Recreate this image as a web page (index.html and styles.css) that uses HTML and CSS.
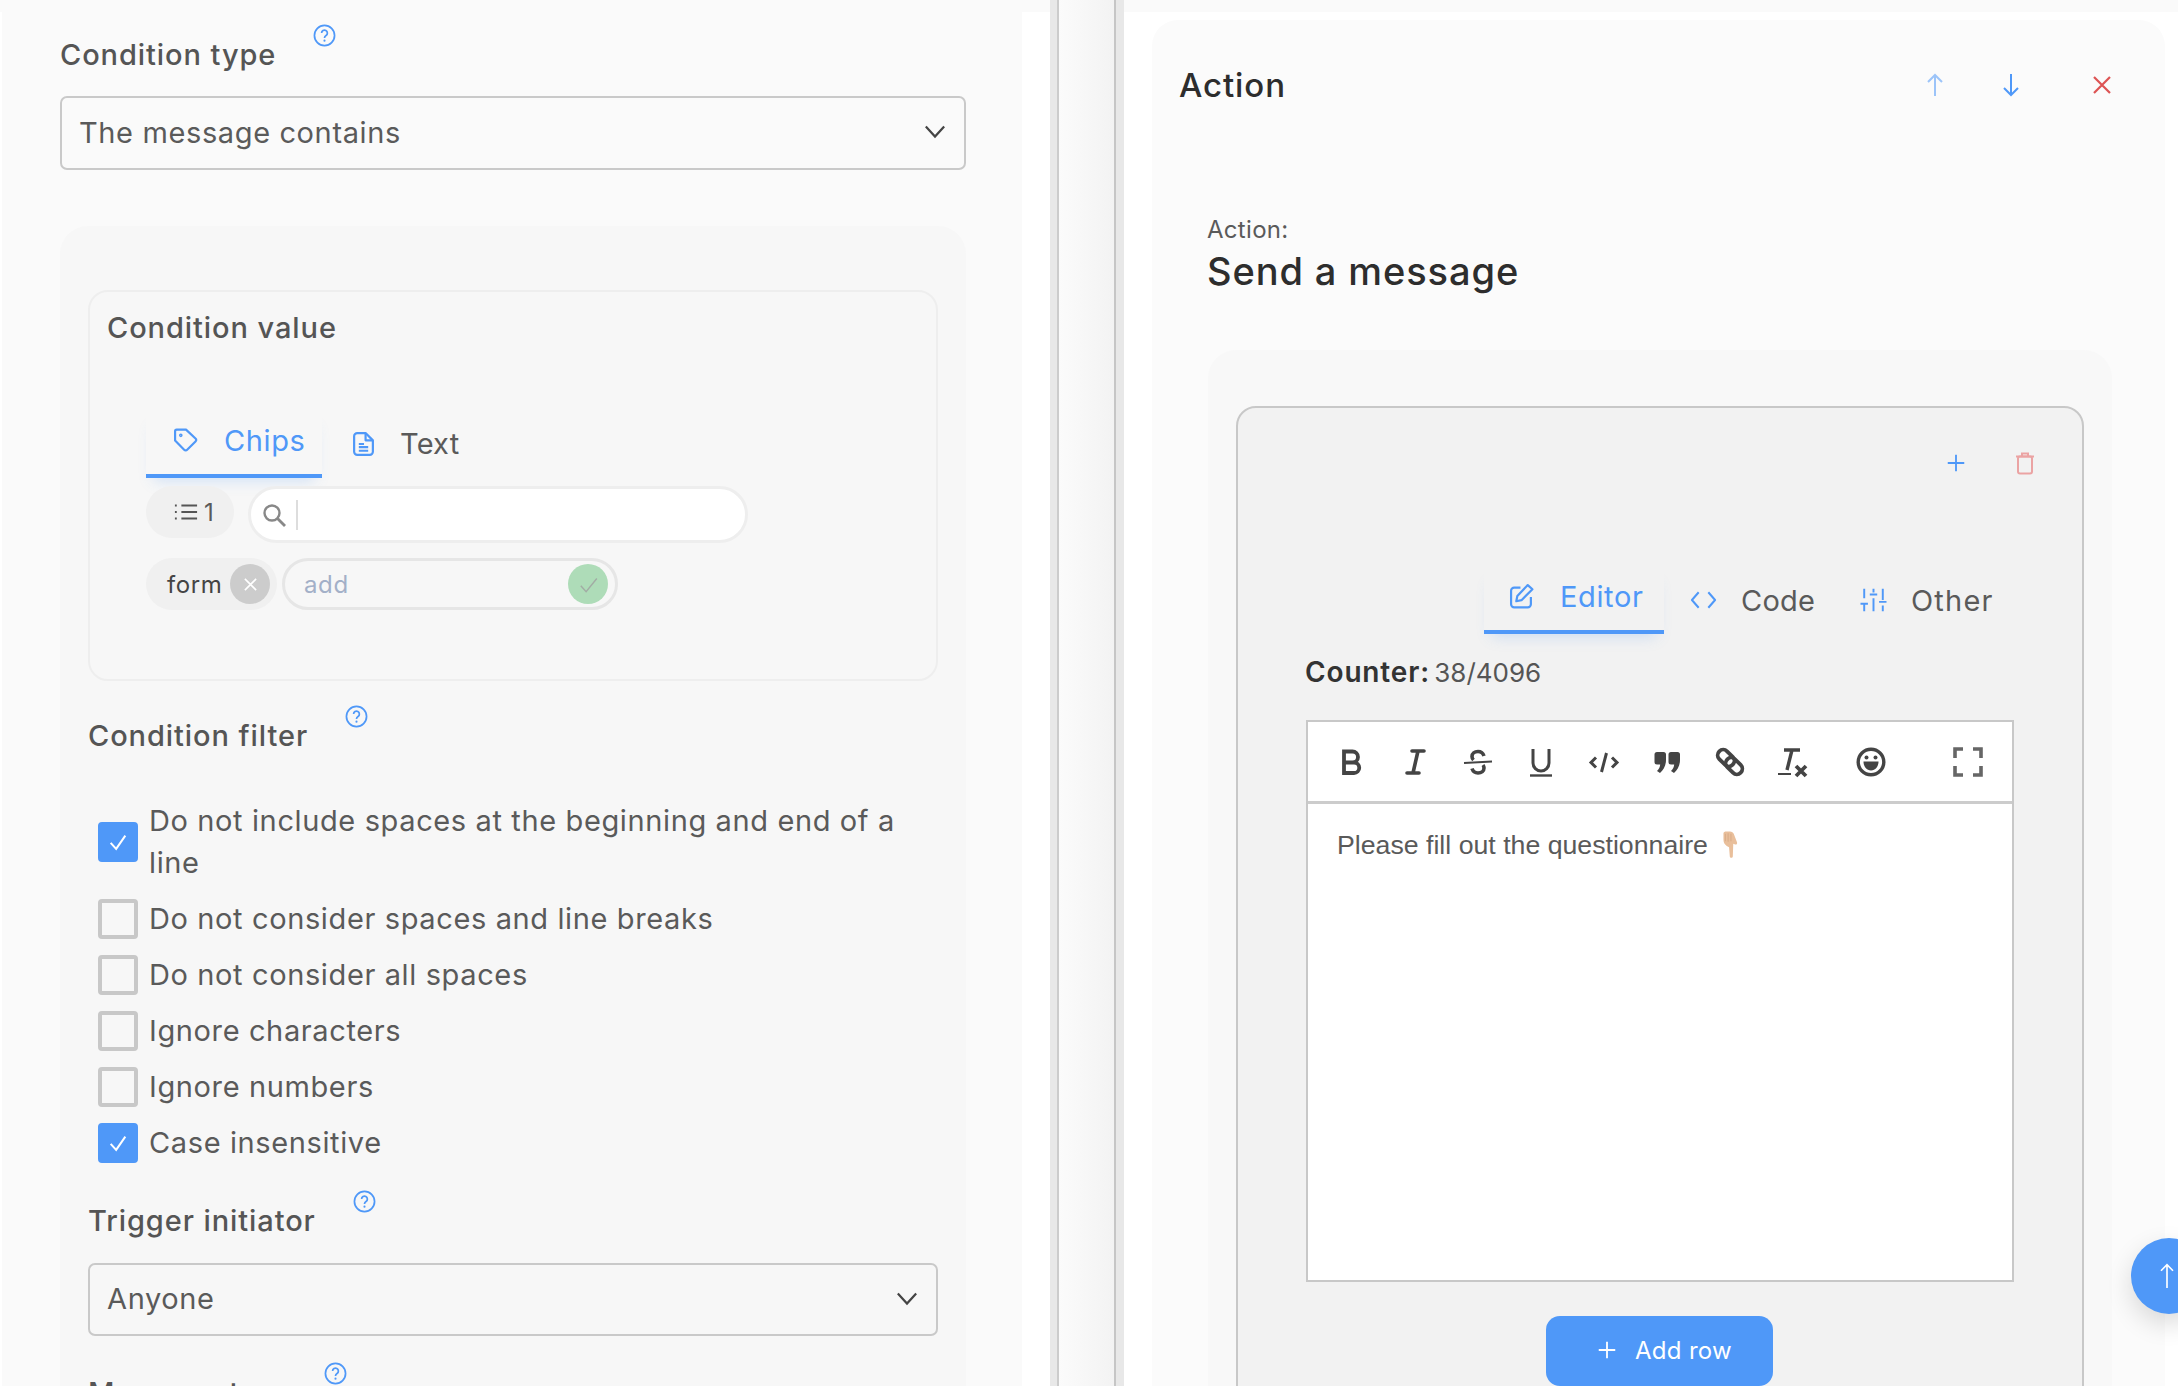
FILE: index.html
```html
<!DOCTYPE html>
<html lang="en">
<head>
<meta charset="utf-8">
<title>Condition and action</title>
<link rel="stylesheet" href="styles.css">
</head>
<body>
<svg class="defs" width="0" height="0" aria-hidden="true">
  <symbol id="help" viewBox="0 0 24 24"><circle cx="12" cy="12" r="10.5" fill="none" stroke="currentColor" stroke-width="1.8"/><path d="M9 9.5a3 3 0 1 1 4.6 2.5c-1 .7-1.6 1.2-1.6 2.5" fill="none" stroke="currentColor" stroke-width="1.8"/><circle cx="12" cy="17.4" r="1.100" fill="currentColor"/></symbol>
  <symbol id="chev" viewBox="0 0 24 24"><path d="M2 6l10 11L22 6" fill="none" stroke="currentColor" stroke-width="2.4"/></symbol>
  <symbol id="check" viewBox="0 0 24 24"><path d="M4 13l6 6.500L20 5" fill="none" stroke="currentColor" stroke-width="2.200"/></symbol>
</svg>

<main class="left-pane">
  <div class="left-col">
    <div class="label-row first">
      <span class="label">Condition type</span>
      <svg class="help"><use href="#help"/></svg>
    </div>
    <div class="select outer-select">
      <span>The message contains</span>
      <svg class="chev"><use href="#chev"/></svg>
    </div>

    <section class="panel">
      <div class="value-box">
        <div class="label">Condition value</div>
        <div class="tabs value-tabs">
          <div class="tab active chips-tab">
            <svg class="tab-icon" viewBox="0 0 24 24"><path d="M21.6 13.4l-8 8a2 2 0 0 1-2.9 0L2 12.5V3.5a1.5 1.5 0 0 1 1.5-1.5h9l9.1 8.6a2 2 0 0 1 0 2.8z"/><circle cx="7.5" cy="7.5" r=".7"/></svg>
            <span>Chips</span>
          </div>
          <div class="tab text-tab">
            <svg class="tab-icon" viewBox="0 0 24 24"><path d="M14 1.5H6a3 3 0 0 0-3 3v15a3 3 0 0 0 3 3h12a3 3 0 0 0 3-3V8.5z"/><path d="M14 1.5v7h7M7.5 12h5M7.5 15h9M7.5 18.500h9"/></svg>
            <span>Text</span>
          </div>
        </div>
        <div class="chip-row search-row">
          <div class="count-chip">
            <svg class="list-icon" viewBox="0 0 26 18"><path d="M8 2h17M8 9h17M8 16h17" stroke="#555" stroke-width="2" fill="none"/><path d="M1 2h2M1 9h2M1 16h2" stroke="#555" stroke-width="2" fill="none"/></svg>
            <span>1</span>
          </div>
          <div class="search">
            <svg class="search-icon" viewBox="0 0 24 24"><circle cx="10" cy="10" r="7.500" fill="none" stroke="#888" stroke-width="2.4"/><path d="M15.500 15.500l7.500 7.500" stroke="#888" stroke-width="2.800"/></svg>
            <span class="caret"></span>
          </div>
        </div>
        <div class="chip-row add-row-line">
          <div class="form-chip">
            <span>form</span>
            <span class="round round-grey"><svg viewBox="0 0 16 16"><path d="M2 2l12 12M14 2L2 14" stroke="#fff" stroke-width="1.700"/></svg></span>
          </div>
          <div class="add-input">
            <span>add</span>
            <span class="round round-green"><svg viewBox="0 0 16 16"><path d="M1.500 9l4.500 5L15 3" stroke="#a2aca4" stroke-width="1.200" fill="none"/></svg></span>
          </div>
        </div>
      </div>

      <div class="label-row filter-label">
        <span class="label">Condition filter</span>
        <svg class="help"><use href="#help"/></svg>
      </div>
      <div class="checks">
        <div class="check-row"><span class="box on"><svg><use href="#check"/></svg></span><span class="check-text">Do not include spaces at the beginning and end of a line</span></div>
        <div class="check-row"><span class="box"></span><span class="check-text">Do not consider spaces and line breaks</span></div>
        <div class="check-row"><span class="box"></span><span class="check-text">Do not consider all spaces</span></div>
        <div class="check-row"><span class="box"></span><span class="check-text">Ignore characters</span></div>
        <div class="check-row"><span class="box"></span><span class="check-text">Ignore numbers</span></div>
        <div class="check-row"><span class="box on"><svg><use href="#check"/></svg></span><span class="check-text">Case insensitive</span></div>
      </div>
      <div class="label-row trigger-label">
        <span class="label">Trigger initiator</span>
        <svg class="help"><use href="#help"/></svg>
      </div>
      <div class="select inner-select">
        <span>Anyone</span>
        <svg class="chev"><use href="#chev"/></svg>
      </div>
      <div class="label-row message-label">
        <span class="label">Message type</span>
        <svg class="help"><use href="#help"/></svg>
      </div>
    </section>
  </div>
</main>

<div class="splitter"></div>

<aside class="right-pane">
  <div class="card">
    <header class="card-head">
      <h1>Action</h1>
      <div class="head-icons">
        <svg class="arrow faded" viewBox="0 0 24 24"><path d="M12 23V2M5 9l7-7 7 7"/></svg>
        <svg class="arrow" viewBox="0 0 24 24"><path d="M12 1v21M5 15l7 7 7-7"/></svg>
        <svg class="close" viewBox="0 0 24 24"><path d="M4 4l16 16M20 4L4 20"/></svg>
      </div>
    </header>
    <div class="action-name">
      <div class="small">Action:</div>
      <div class="big">Send a message</div>
    </div>
    <section class="msg-panel">
      <div class="msg-box">
        <div class="row-tools">
          <svg class="plus" viewBox="0 0 24 24"><path d="M12 3v18M3 12h18"/></svg>
          <svg class="trash" viewBox="0 0 24 24"><path d="M3 5.500h18M9 5.500V2.500h6v3"/><rect x="5" y="5.500" width="14" height="17" rx="2"/></svg>
        </div>
        <div class="tabs editor-tabs">
          <div class="tab active editor-tab">
            <svg class="tab-icon" viewBox="0 0 24 24"><path d="M11 4H5a3 3 0 0 0-3 3v13a3 3 0 0 0 3 3h13a3 3 0 0 0 3-3v-7"/><path d="M18 1.500l4.500 4L12 16l-5 1 1-5z"/></svg>
            <span>Editor</span>
          </div>
          <div class="tab code-tab">
            <svg class="tab-icon wide" viewBox="0 0 28 24"><path d="M9 4l-7 8 7 8M19 4l7 8-7 8"/></svg>
            <span>Code</span>
          </div>
          <div class="tab other-tab">
            <svg class="tab-icon wide" viewBox="0 0 28 28"><path d="M4 2v10M4 18v8M14 2v4M14 12v14M24 2v12M24 20v6M0 18h8M10 8h8M20 16h8"/></svg>
            <span>Other</span>
          </div>
        </div>
        <div class="counter"><b>Counter:</b> 38/4096</div>
        <div class="editor">
          <div class="toolbar">
            <span class="tb"><svg viewBox="0 0 32 32"><path d="M8 5.500h8.500a5.500 5.500 0 0 1 0 11H8zM8 16.500h10a5.200 5.200 0 0 1 0 10.500H8z" fill="none" stroke-width="3.800"/></svg></span>
            <span class="tb"><svg viewBox="0 0 32 32"><path d="M13 5h12M8 27h12M19 5l-5 22" fill="none" stroke-width="3.600" stroke-linecap="round"/></svg></span>
            <span class="tb"><svg viewBox="0 0 32 32"><path d="M22 10c-1-3-3.500-4.500-6-4.500-3.500 0-6 2-6 5 0 1.500.6 2.700 1.500 3.600M21 19c.7.900 1 1.900 1 3 0 3-2.500 5-6 5-2.500 0-5-1.500-6-4.500" fill="none" stroke-width="3.600"/><path d="M2 17l28-1.500" fill="none" stroke-width="2"/></svg></span>
            <span class="tb"><svg viewBox="0 0 32 32"><path d="M8 3v14a8 8 0 0 0 16 0V3" fill="none" stroke-width="3"/><path d="M5 29.500h22" fill="none" stroke-width="2.400"/></svg></span>
            <span class="tb"><svg viewBox="0 0 32 32"><path d="M8 11.500l-5 5 5 5M24 11.500l5 5-5 5M18.500 7l-5 19" fill="none" stroke-width="3"/></svg></span>
            <span class="tb"><svg viewBox="0 0 32 32"><path class="solid" d="M6 6h6.500a2.500 2.500 0 0 1 2.500 2.500V14c0 5.500-2.500 10-6 13l-3-2c2-2 3-4 3.200-6.500H6A2.500 2.500 0 0 1 3.500 16V8.500A2.500 2.500 0 0 1 6 6zM20 6h6.500A2.500 2.500 0 0 1 29 8.500V14c0 5.500-2.500 10-6 13l-3-2c2-2 3-4 3.200-6.500H20a2.500 2.500 0 0 1-2.500-2.500V8.500A2.500 2.500 0 0 1 20 6z"/></svg></span>
            <span class="tb"><svg viewBox="0 0 32 32"><rect x="6.500" y="2.500" width="11" height="19" rx="5.500" transform="rotate(-45 12 12)" fill="none" stroke-width="3.800"/><rect x="14.500" y="10.500" width="11" height="19" rx="5.500" transform="rotate(-45 20 20)" fill="none" stroke-width="3.800"/></svg></span>
            <span class="tb"><svg viewBox="0 0 32 32"><path d="M7 4h16M15 4l-5 20" fill="none" stroke-width="3.400"/><path d="M1 28h13" fill="none" stroke-width="2"/><path d="M19 20l10 10M29 20L19 30" fill="none" stroke-width="3.800"/></svg></span>
            <span class="tb tb-emoji"><svg viewBox="0 0 32 32"><circle cx="16" cy="16" r="12.800" fill="none" stroke-width="3.400"/><circle class="solid" cx="11.500" cy="11.500" r="2"/><circle class="solid" cx="20.500" cy="11.500" r="2"/><path class="solid" d="M8.500 15.500h15c0 5-3 9-7.500 9s-7.500-4-7.500-9z"/></svg></span>
            <span class="tb tb-full"><svg viewBox="0 0 32 32"><path class="grey" d="M3 12V3h8M21 3h8v9M3 20v9h8M29 20v9h-8" fill="none" stroke-width="3.600"/></svg></span>
          </div>
          <div class="editor-body">
            <span>Please fill out the questionnaire</span>
            <svg class="hand" viewBox="0 0 20 30" role="img" aria-label="pointing down"><path d="M3 2.500c0-1.500 1.500-2 3-2h4c2 0 3.500 1 4 2.500l3.500 9c.500 1.500-.500 3-2 2.500l-2-.800-.500 13.500c0 2-3.200 2-3.200 0L9 17.500l-2.500-1.500C4 14.500 3 12 3 9.500z" fill="#e9bf9b"/><path d="M5 3v8M8 2.500v9M11 3v8" stroke="#cfa27e" stroke-width=".7" fill="none"/></svg>
          </div>
        </div>
        <button class="add-row" type="button">
          <svg viewBox="0 0 24 24"><path d="M12 3v18M3 12h18"/></svg>
          <span>Add row</span>
        </button>
      </div>
    </section>
  </div>
</aside>

<button class="fab" type="button" aria-label="Scroll to top">
  <svg viewBox="0 0 24 34"><path d="M12 33V2M4 10l8-8 8 8"/></svg>
</button>
</body>
</html>
```

FILE: styles.css
```css
* { box-sizing: border-box; }
html, body { margin: 0; height: 1386px; overflow: hidden; }
body {
  display: flex;
  width: 2178px;
  background: linear-gradient(#fafafa 12px, #fff 12px);
  font-family: Inter, "Liberation Sans", sans-serif;
  font-size: 28px;
  color: #5a5a5a;
  letter-spacing: .62px;
}
.defs { position: absolute; }

/* left pane */
.left-pane { flex: none; width: 1050px; padding-left: 2px; }
.left-col {
  width: 1020px;
  height: 1386px;
  padding: 35px 56px 0 58px;
  background: #fafafa;
  overflow: hidden;
}
.label { font-size: 29px; font-weight: 500; line-height: 40px; letter-spacing: .92px; color: #555; white-space: nowrap; }
.label-row { display: flex; height: 40px; }
.help { flex: none; width: 23px; height: 23px; margin: -11px 0 0 37px; color: #4f98f8; }
.message-label .help { margin-left: 29px; }

.select {
  display: flex;
  align-items: center;
  justify-content: space-between;
  border: 2px solid #c9c9c9;
  border-radius: 7px;
  height: 74px;
  padding: 0 18px 2px 17px;
  font-size: 29px;
}
.outer-select { margin-top: 21px; }
.inner-select { margin-top: 22px; height: 73px; }
.chev { width: 22px; height: 22px; color: #444; }

.panel {
  margin-top: 56px;
  height: 1200px;
  padding: 64px 28px 0;
  background: #f7f7f7;
  border-radius: 28px;
}
.value-box {
  height: 391px;
  padding: 16px 17px 0;
  border: 2px solid #eee;
  border-radius: 20px;
}

.tabs { display: flex; height: 68px; }
.value-tabs { margin: 62px 0 0 39px; }
.tab { display: flex; align-items: center; height: 68px; font-size: 29px; white-space: nowrap; }
.tab.active { color: #4f98f8; border-bottom: 4px solid #4f98f8; padding-bottom: 4px; box-shadow: 0 10px 14px -8px rgba(79,152,248,.25); }
.tab-icon { flex: none; width: 25px; height: 26px; fill: none; stroke: #4f98f8; stroke-width: 2.100; stroke-linejoin: round; }
.tab-icon.wide { width: 27px; }
.chips-tab { width: 176px; padding-left: 27px; gap: 26px; }
.text-tab { padding-left: 29px; gap: 24px; padding-bottom: 1px; letter-spacing: .2px; }

.chip-row { display: flex; margin-left: 39px; font-size: 24px; }
.search-row { margin-top: 8px; gap: 14px; }
.add-row-line { margin-top: 15px; gap: 5px; }
.count-chip {
  flex: none;
  display: flex;
  align-items: center;
  gap: 6px;
  width: 88px;
  height: 52px;
  padding-left: 28px;
  border-radius: 26px;
  background: #f0f0f0;
}
.list-icon { width: 24px; height: 18px; }
.search {
  flex: none;
  display: flex;
  align-items: center;
  gap: 10px;
  width: 500px;
  height: 57px;
  padding-left: 11px;
  background: #fff;
  border: 3px solid #eee;
  border-radius: 29px;
}
.search-icon { width: 24px; height: 24px; }
.caret { width: 2px; height: 30px; background: #ddd; }
.form-chip {
  flex: none;
  display: flex;
  align-items: center;
  justify-content: space-between;
  width: 131px;
  height: 52px;
  padding: 0 7px 0 21px;
  border-radius: 26px;
  background: #f0f0f0;
  color: #444;
}
.round { display: flex; align-items: center; justify-content: center; width: 40px; height: 40px; border-radius: 50%; }
.round-grey svg { width: 15px; height: 15px; }
.round-green svg { width: 19px; height: 19px; }
.round-grey { background: #ccc; }
.round-green { background: #aedcb8; }
.add-input {
  flex: none;
  display: flex;
  align-items: center;
  justify-content: space-between;
  width: 336px;
  height: 52px;
  padding: 0 7px 0 19px;
  border: 3px solid #e6e6e6;
  border-radius: 26px;
  color: #a3b0c8;
}

.filter-label { margin-top: 35px; }
.checks { display: flex; flex-direction: column; gap: 14px; margin: 44px 0 0 10px; }
.check-row { display: flex; align-items: center; gap: 11px; }
.check-text { line-height: 42px; font-size: 29px; }
.box { flex: none; width: 40px; height: 40px; border: 4px solid #c8c8c8; border-radius: 4px; }
.box.on { border-color: #4f98f8; background: #4f98f8; color: #fff; }
.box svg { display: block; width: 32px; height: 32px; padding: 5px; }
.trigger-label { margin-top: 37px; }
.message-label { margin-top: 37px; }

/* splitter */
.splitter {
  flex: none;
  width: 74px;
  border-left: 7px solid #e8e8e8;
  border-right: 8px solid #e8e8e8;
  background: linear-gradient(90deg, #ccc 2px, #fbfbfb 2px, #f3f3f3 57px, #c6c6c6 57px);
}

/* right pane */
.right-pane { flex: none; width: 1054px; padding: 20px 13px 0 28px; overflow: hidden; }
.card {
  height: 1500px;
  padding: 43px 51px 0 27px;
  background: #fbfbfb;
  border-radius: 26px 26px 0 0;
}
.card-head { display: flex; align-items: center; height: 44px; }
h1 { margin: 0; font-size: 33px; font-weight: 500; color: #2d2d2d; letter-spacing: .9px; }
.head-icons { display: flex; align-items: center; margin-left: auto; }
.arrow { width: 24px; height: 24px; fill: none; stroke: #4f98f8; stroke-width: 2; margin-right: 52px; }
.arrow.faded { opacity: .55; }
.arrow + .arrow { margin-right: 67px; }
.close { width: 24px; height: 24px; fill: none; stroke: #dd5353; stroke-width: 2.200; }

.action-name { margin: 108px 0 0 28px; color: #2d2d2d; }
.small { font-size: 24px; line-height: 30px; color: #5a5a5a; letter-spacing: .3px; }
.big { margin-top: 3px; font-size: 38px; line-height: 46px; font-weight: 500; letter-spacing: .9px; }

.msg-panel {
  width: 904px;
  margin: 56px 0 0 29px;
  padding: 56px 28px 0;
  background: #f8f8f8;
  border-radius: 28px;
}
.msg-box {
  width: 848px;
  height: 1100px;
  padding: 43px 45px 0 0;
  border: 2px solid #c8c8c8;
  border-radius: 20px 20px 0 0;
  background: #f2f2f2;
}
.row-tools { display: flex; justify-content: flex-end; gap: 46px; height: 24px; }
.plus { width: 22px; height: 24px; fill: none; stroke: #4f98f8; stroke-width: 2; }
.trash { width: 24px; height: 24px; fill: none; stroke: #eba3a3; stroke-width: 2; }

.editor-tabs { margin: 91px 0 0 246px; }
.editor-tab { width: 180px; padding-left: 25px; gap: 26px; }
.code-tab { width: 196px; padding-left: 26px; gap: 24px; letter-spacing: .2px; }
.other-tab { gap: 24px; letter-spacing: 1.2px; }
.counter { margin: 20px 0 0 67px; padding-top: 1px; line-height: 35px; font-size: 26px; color: #555; letter-spacing: 0; word-spacing: -3px; }
.counter b { font-size: 28px; font-weight: 600; letter-spacing: .85px; color: #333; }

.editor {
  width: 708px;
  height: 562px;
  margin: 30px 0 0 68px;
  background: #fff;
  border: 2px solid #c8c8c8;
}
.toolbar { display: flex; align-items: center; height: 82px; padding-left: 12px; border-bottom: 3px solid #ccc; }
.tb { flex: none; display: flex; justify-content: center; width: 63px; }
.tb svg { width: 32px; height: 32px; stroke: #444; }
.tb .solid { fill: #444; stroke: none; }
.tb .grey { stroke: #666; }
.tb-emoji { margin-left: 15px; }
.tb-full { margin-left: 34px; }
.editor-body {
  display: flex;
  align-items: center;
  gap: 12px;
  padding: 21px 0 0 29px;
  font-family: "Liberation Sans", Arial, sans-serif;
  font-size: 26.7px;
  line-height: 40px;
  letter-spacing: 0;
  color: #5a5a5a;
}
.hand { width: 20px; height: 28px; }

.add-row {
  display: flex;
  align-items: center;
  gap: 17px;
  width: 227px;
  height: 70px;
  margin: 34px 0 0 308px;
  padding: 0 0 2px 50px;
  border: 0;
  border-radius: 14px;
  background: #4f98f8;
  color: #fff;
  font: inherit;
  font-size: 24px;
  letter-spacing: .3px;
}
.add-row svg { width: 22px; height: 22px; fill: none; stroke: #fff; stroke-width: 2; }

.fab {
  position: absolute;
  left: 2131px;
  top: 1238px;
  width: 76px;
  height: 76px;
  padding: 0;
  border: 0;
  border-radius: 50%;
  background: #4f98f8;
  box-shadow: 0 10px 26px rgba(0,0,0,.14);
}
.fab svg { display: block; width: 18px; height: 26px; margin-left: 27px; fill: none; stroke: #fff; stroke-width: 2.200; }
```
